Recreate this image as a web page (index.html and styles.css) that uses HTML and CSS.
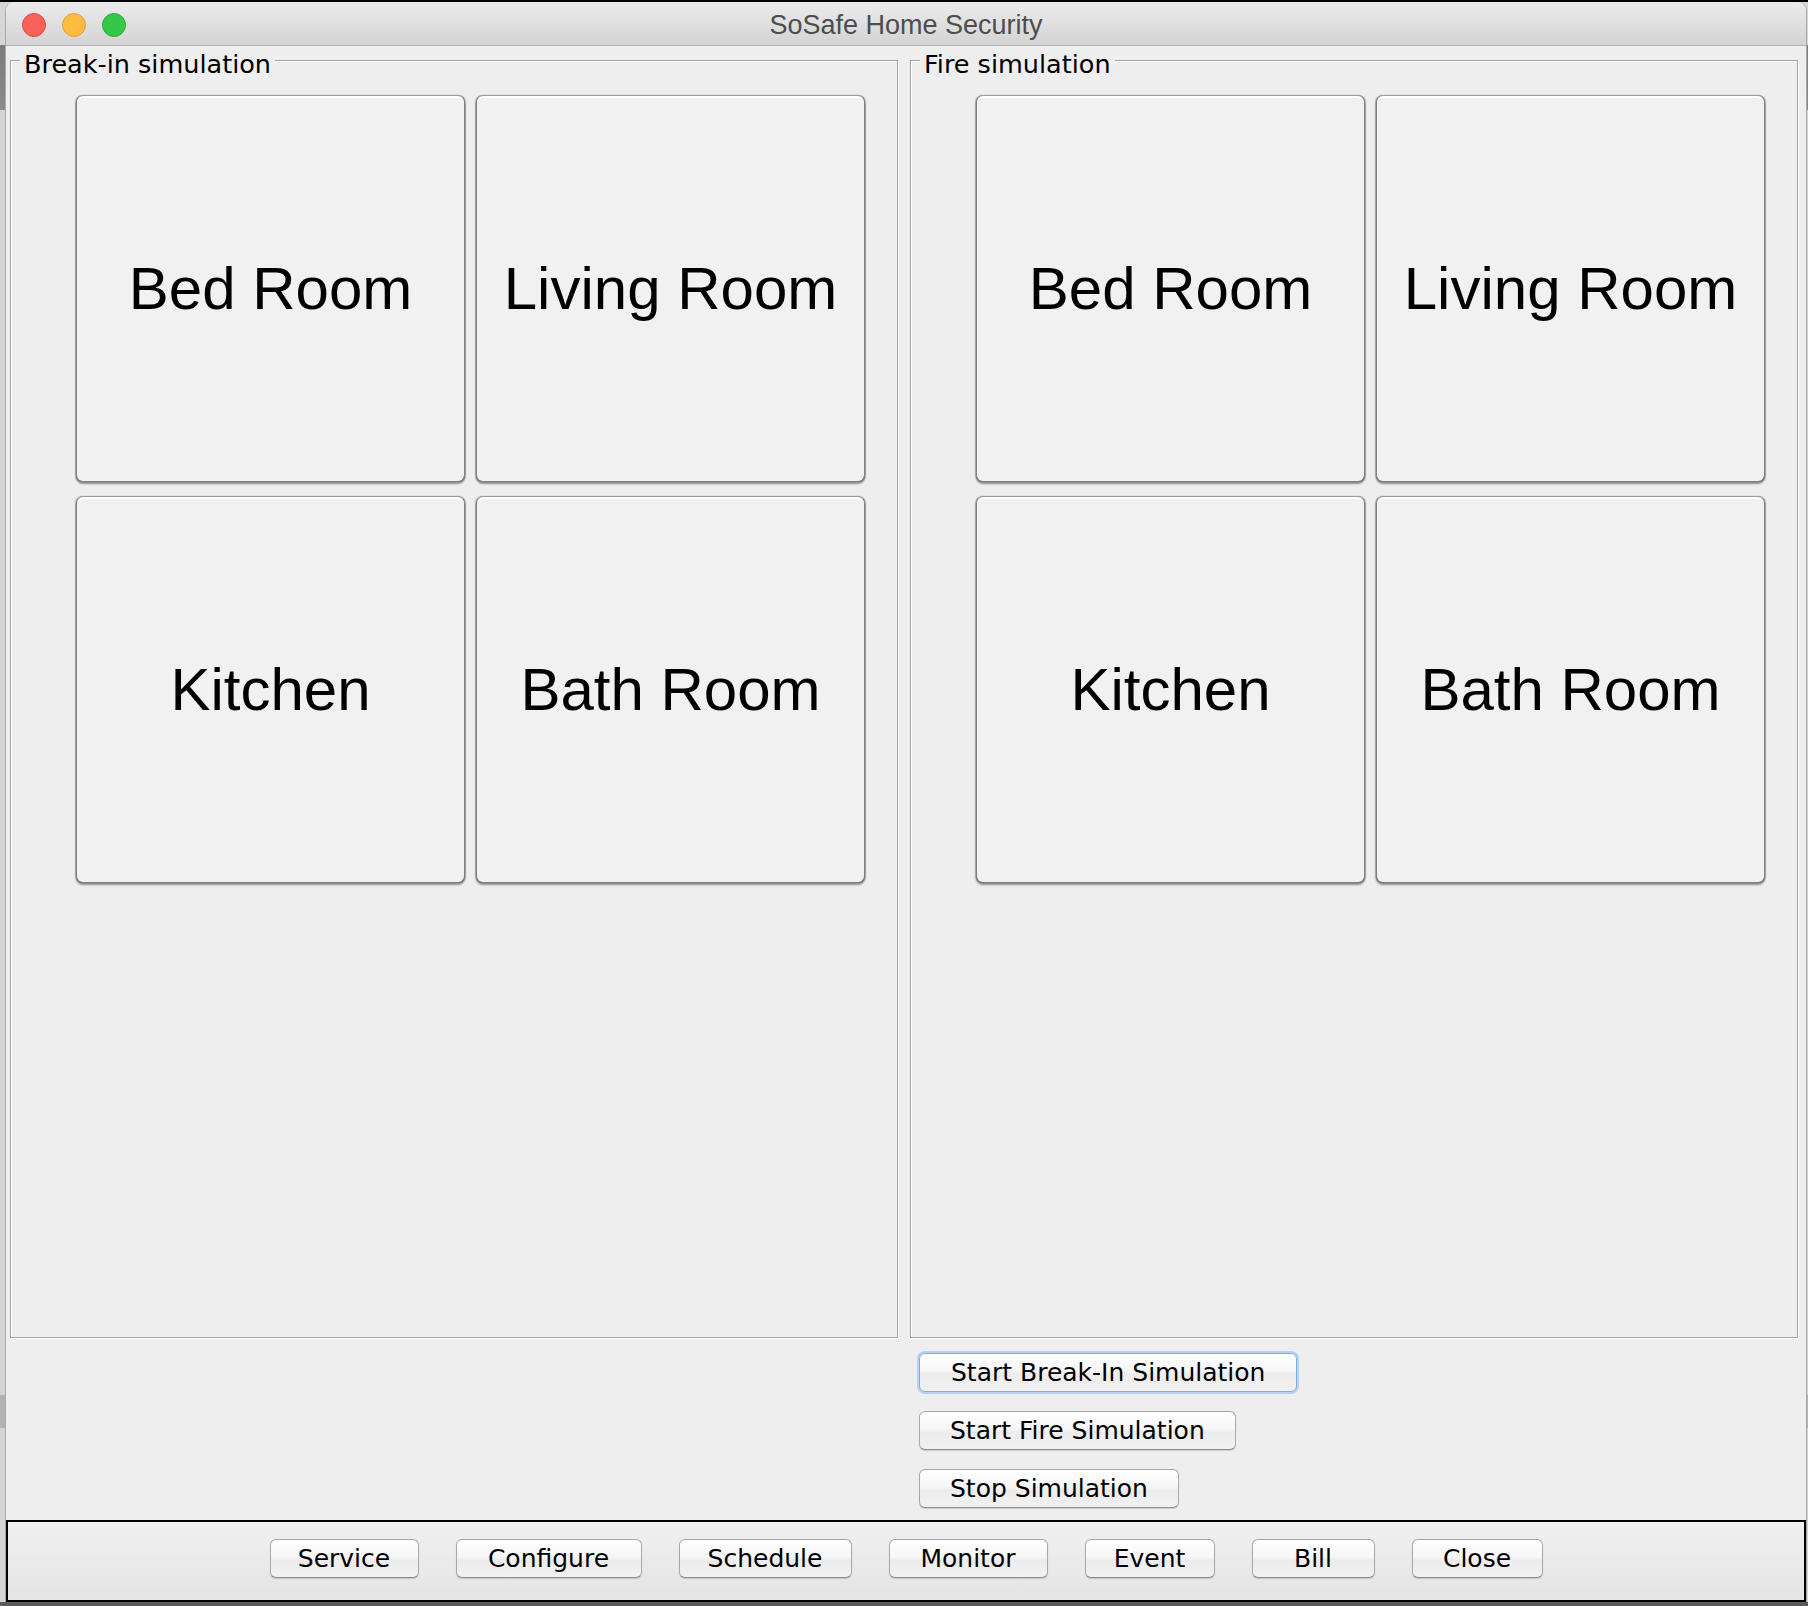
FILE: index.html
```html
<!DOCTYPE html>
<html lang="en">
<head>
<meta charset="utf-8">
<title>SoSafe Home Security</title>
<link rel="stylesheet" href="styles.css">
</head>
<body>
<div class="desktop">
  <div class="window">
    <header class="titlebar">
      <div class="lights">
        <span class="light red"></span>
        <span class="light yellow"></span>
        <span class="light green"></span>
      </div>
      <div class="title">SoSafe Home Security</div>
      <div></div>
    </header>

    <main class="content">
      <section class="panel">
        <div class="panel-title">Break-in simulation</div>
        <div class="rooms">
          <button class="room">Bed Room</button>
          <button class="room">Living Room</button>
          <button class="room">Kitchen</button>
          <button class="room">Bath Room</button>
        </div>
      </section>

      <section class="panel">
        <div class="panel-title">Fire simulation</div>
        <div class="rooms">
          <button class="room">Bed Room</button>
          <button class="room">Living Room</button>
          <button class="room">Kitchen</button>
          <button class="room">Bath Room</button>
        </div>
      </section>

      <div></div>
      <div class="sim-buttons">
        <button class="btn focused">Start Break-In Simulation</button>
        <button class="btn">Start Fire Simulation</button>
        <button class="btn">Stop Simulation</button>
      </div>
    </main>

    <footer class="toolbar">
      <button class="btn tb-service">Service</button>
      <button class="btn tb-configure">Configure</button>
      <button class="btn tb-schedule">Schedule</button>
      <button class="btn tb-monitor">Monitor</button>
      <button class="btn tb-event">Event</button>
      <button class="btn tb-bill">Bill</button>
      <button class="btn tb-close">Close</button>
    </footer>
  </div>
</div>
</body>
</html>
```

FILE: styles.css
```css
* { box-sizing: border-box; }

html, body {
  margin: 0;
  padding: 0;
  background: #000;
}

.desktop {
  width: 1808px;
  height: 1606px;
  padding: 2px 1px 4px 5px;
  background: linear-gradient(to bottom, #000 0, #000 2px, #d6d6d6 2px, #d6d6d6 45px, #7c7c7c 45px, #8a8a8a 110px, #d4d4d4 110px, #d4d4d4 1395px, #b2b2b2 1395px, #b2b2b2 1428px, #d4d4d4 1428px, #d4d4d4 1602px, #5a5a5a 1602px);
}

.window {
  width: 1802px;
  height: 1600px;
  display: flex;
  flex-direction: column;
  background: #eeeeee;
  border-left: 1px solid #a9a9a9;
  border-right: 1px solid #a9a9a9;
  border-radius: 9px 9px 0 0;
  overflow: hidden;
}

/* ---------- title bar ---------- */
.titlebar {
  height: 44px;
  flex: none;
  display: grid;
  grid-template-columns: 1fr auto 1fr;
  background: linear-gradient(to bottom, #ececec, #d3d3d3);
  border-bottom: 1px solid #b2b2b2;
}

.lights {
  display: flex;
  gap: 16px;
  padding: 11px 0 0 16px;
}

.light {
  width: 24px;
  height: 24px;
  border-radius: 50%;
}
.light.red    { background: #fc605b; border: 1px solid #de4b47; }
.light.yellow { background: #fdbc40; border: 1px solid #dfa23a; }
.light.green  { background: #34c84a; border: 1px solid #29ad37; }

.title {
  font-family: "Liberation Sans", Arial, sans-serif;
  font-size: 27px;
  line-height: 40px;
  color: #4d4d4d;
  padding-top: 3px;
}

/* ---------- content ---------- */
.content {
  flex: 1;
  display: grid;
  grid-template-columns: 888px 888px;
  grid-template-rows: 1278px 1fr;
  column-gap: 12px;
  padding: 14px 0 0 4px;
}

.panel {
  position: relative;
  border: 1px solid #a4a4a4;
  box-shadow: inset 1px 1px 0 #ffffff, 1px 1px 0 #ffffff;
}

.panel-title {
  position: absolute;
  top: -12px;
  left: 9px;
  padding: 0 4px;
  background: #eeeeee;
  font-family: "DejaVu Sans", sans-serif;
  font-size: 25.5px;
  line-height: 30px;
  color: #000;
}

.rooms {
  display: grid;
  grid-template-columns: 389px 389px;
  grid-template-rows: 387px 387px;
  column-gap: 11px;
  row-gap: 14px;
  margin: 34px 0 0 65px;
}

.room {
  font-family: "Liberation Sans", Arial, sans-serif;
  font-size: 60px;
  color: #000;
  background: #f1f1f1;
  border: 1px solid #7f7f7f;
  border-top-color: #9c9c9c;
  border-radius: 7px;
  box-shadow: inset 0 2px 0 #ffffff, 0 2px 2px rgba(0, 0, 0, 0.4), -1px 0 1px rgba(0,0,0,0.25), 1px 0 1px rgba(0,0,0,0.25);
  padding: 0;
  cursor: default;
}

/* ---------- aqua push buttons ---------- */
.btn {
  height: 39px;
  padding: 0 30px;
  font-family: "DejaVu Sans", sans-serif;
  font-size: 25px;
  line-height: 37px;
  color: #000;
  text-align: center;
  background: linear-gradient(to bottom, #ffffff 0%, #f6f6f6 45%, #ececec 55%, #f1f1f1 100%);
  border: 1px solid #a8a8a8;
  border-bottom-color: #8c8c8c;
  border-radius: 6px;
  box-shadow: 0 1px 1px rgba(0, 0, 0, 0.15);
  white-space: nowrap;
  cursor: default;
}

.btn.focused {
  padding: 0 31px;
  border-color: #78aeea;
  box-shadow: 0 0 0 2px rgba(140, 185, 240, 0.55);
}

.sim-buttons {
  display: flex;
  flex-direction: column;
  align-items: flex-start;
  gap: 19px;
  padding: 15px 0 0 9px;
}

/* ---------- bottom toolbar ---------- */
.toolbar {
  height: 82px;
  flex: none;
  display: flex;
  justify-content: center;
  align-items: flex-start;
  gap: 37px;
  padding-top: 17px;
  border: 2px solid #000;
  background: linear-gradient(to bottom, #f0f0f0, #e4e4e4);
}

.toolbar .btn { padding: 0; }
.tb-service   { width: 149px; }
.tb-configure { width: 186px; }
.tb-schedule  { width: 173px; }
.tb-monitor   { width: 159px; }
.tb-event     { width: 130px; }
.tb-bill      { width: 123px; }
.tb-close     { width: 131px; }
```
